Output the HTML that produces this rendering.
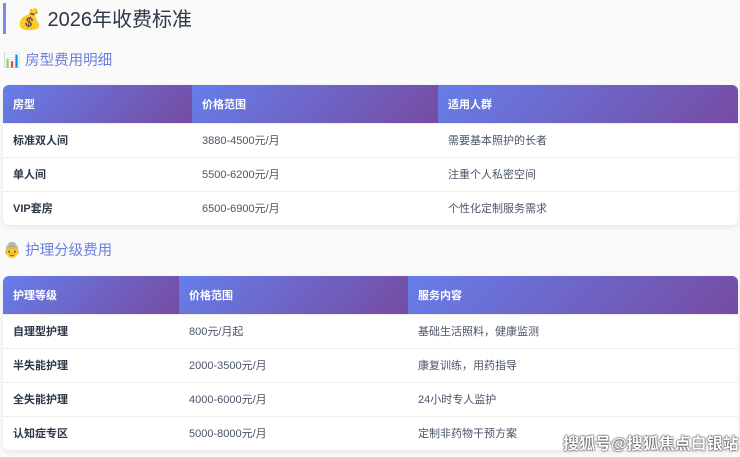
<!DOCTYPE html>
<html><head><meta charset="utf-8"><style>
*{margin:0;padding:0;box-sizing:border-box}
body{width:740px;height:457px;overflow:hidden;background:#fafafa;font-family:"Liberation Sans","Noto Sans CJK SC",sans-serif;position:relative}
.bar{position:absolute;left:3px;top:3px;width:3px;height:31px;background:#7b8ae8}
.t1{position:absolute;left:17px;top:7px;font-size:20px;color:#2d3748;line-height:26px}
.h{position:absolute;left:3px;font-size:14.5px;color:#6b7ee0;line-height:20px}
table{position:absolute;left:3px;width:735px;border-collapse:collapse;background:#fff;box-shadow:0 2px 6px rgba(0,0,0,.08);border-radius:6px;overflow:hidden;font-size:11px}
th{height:38px;text-align:left;padding-left:10px;color:#fff;font-weight:bold;background:linear-gradient(135deg,#667eea,#764ba2)}
td{height:34px;padding-left:10px;color:#4a5568;border-top:1px solid #eee}
td:first-child{font-weight:bold;color:#2d3748}
.wm{position:absolute;left:563px;top:430px;font-size:16px;color:#fff;text-shadow:0 0 2px #333,0 0 1px #000;font-weight:bold}
</style></head><body>
<div class="bar"></div>
<div class="t1">💰 2026年收费标准</div>
<div class="h" style="top:51px">📊 房型费用明细</div>
<table style="top:85px">
<tr><th style="width:189px">房型</th><th style="width:246px">价格范围</th><th>适用人群</th></tr>
<tr><td>标准双人间</td><td>3880-4500元/月</td><td>需要基本照护的长者</td></tr>
<tr><td>单人间</td><td>5500-6200元/月</td><td>注重个人私密空间</td></tr>
<tr><td>VIP套房</td><td>6500-6900元/月</td><td>个性化定制服务需求</td></tr>
</table>
<div class="h" style="top:241px">👵 护理分级费用</div>
<table style="top:276px">
<tr><th style="width:176px">护理等级</th><th style="width:229px">价格范围</th><th>服务内容</th></tr>
<tr><td>自理型护理</td><td>800元/月起</td><td>基础生活照料，健康监测</td></tr>
<tr><td>半失能护理</td><td>2000-3500元/月</td><td>康复训练，用药指导</td></tr>
<tr><td>全失能护理</td><td>4000-6000元/月</td><td>24小时专人监护</td></tr>
<tr><td>认知症专区</td><td>5000-8000元/月</td><td>定制非药物干预方案</td></tr>
</table>
<div class="wm">搜狐号@搜狐焦点白银站</div>
</body></html>
